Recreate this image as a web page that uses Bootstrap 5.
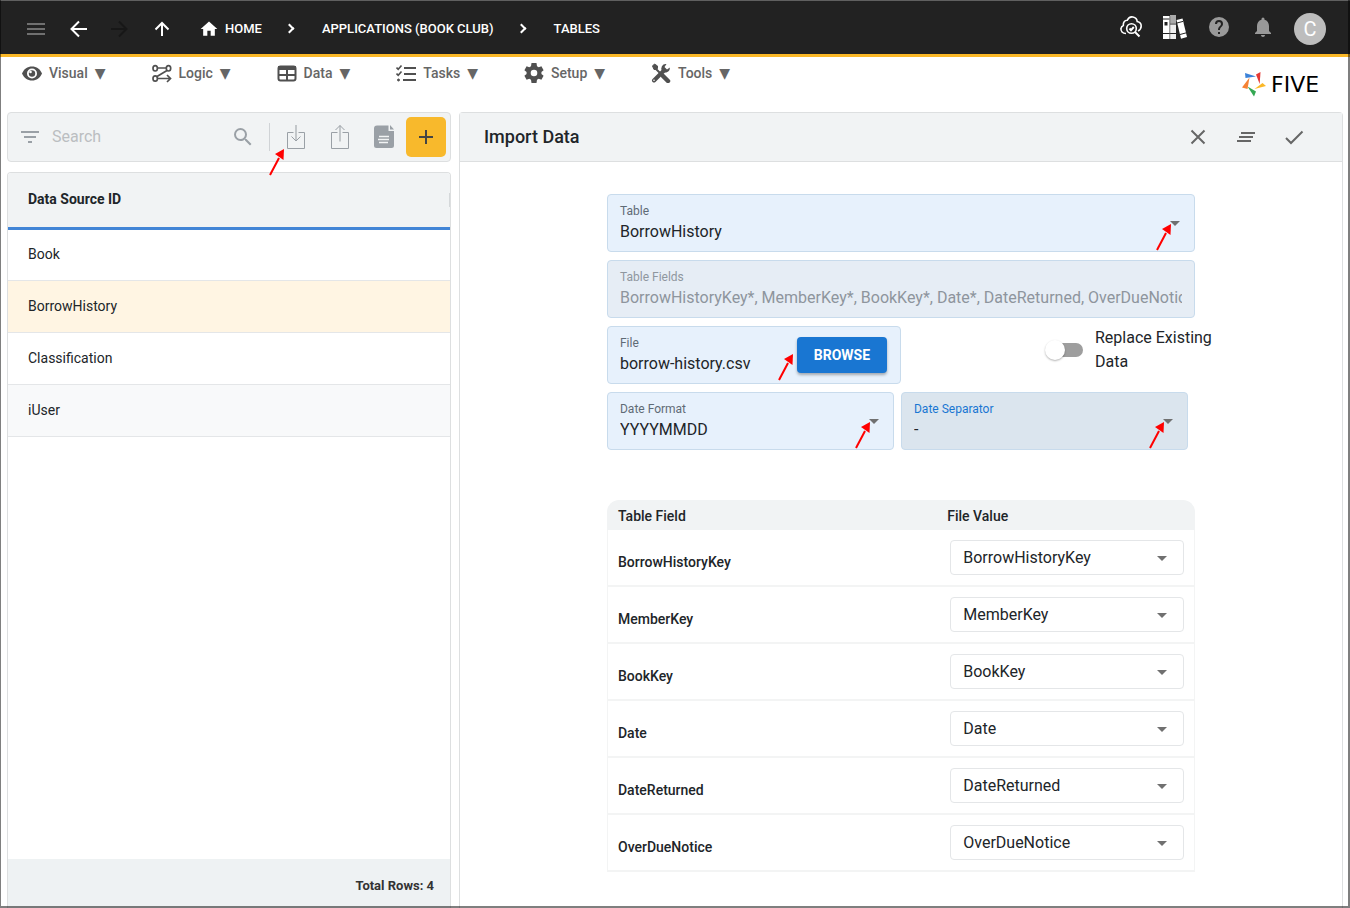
<!DOCTYPE html>
<html lang="en">
<head>
<meta charset="utf-8">
<meta name="viewport" content="width=device-width, initial-scale=1">
<title>Five - Import Data</title>
<link href="https://cdn.jsdelivr.net/npm/bootstrap@5.3.0/dist/css/bootstrap.min.css" rel="stylesheet">
<style>
  body { font-family: Roboto, "Noto Sans", sans-serif; color: #212529; background: #fff; font-size: 14px; }
  body::after { content: ""; position: fixed; inset: 0; pointer-events: none; z-index: 10;
    border: solid rgba(0,0,0,.5); border-width: 0 2px 2px 1px; }
  a { color: inherit; text-decoration: none; }
  svg { display: block; flex: none; }
  .icon-btn { display: flex; align-items: center; justify-content: center; padding: 0; border: 0; background: none; color: inherit; }

  .topbar { height: 57px; padding: 2px 24px 0; background: #222; border-top: 1px solid #606060; border-bottom: 3px solid #fbb827; color: #fff; }
  .tool-nav { gap: 18px; }
  .crumbs { margin-left: 25px; font-size: 13px; font-weight: 500; }
  .crumbs li { display: flex; align-items: center; }
  .crumbs a { display: flex; align-items: center; gap: 6px; }
  .crumbs li + li::before { content: ""; width: 7px; height: 7px; margin: 0 29px 0 24px; border: solid #fff; border-width: 2px 2px 0 0; transform: rotate(45deg); }
  .status .icon-btn { width: 44px; height: 32px; padding-bottom: 4px; }
  .avatar { width: 32px; height: 32px; background: #bdbdbd; font-size: 20px; margin-left: 9px; }

  .menubar { height: 55px; padding: 4px 20px 0 22px; color: #666; }
  .menu-list { gap: 46px; font-weight: 500; height: 24px; }
  .menu-list a { display: flex; align-items: center; gap: 7px; }
  .menu-list span { font-family: "DejaVu Sans", sans-serif; font-weight: 400; }
  .menu-list svg { color: #505050; }
  .brand-five { width: 88px; margin-top: 11px; gap: 5px; height: 26px; font: 22px/26px "DejaVu Sans", sans-serif; color: #000; }

  .workspace { padding: 0 7px; gap: 8px; }
  .sidebar { flex: 0 0 444px; min-width: 0; gap: 10px; }
  .pane { border: 1px solid #dddfe0; border-bottom: 0; border-radius: 4px 4px 0 0; background: #fff; }
  .searchbar { height: 50px; padding: 0 4px 0 12px; border: 1px solid #dddfe0; border-radius: 4px; background: #f1f3f4; color: #9aa0a6; }
  .searchbar input { border: 0; background: none; outline: 0; font-size: 16px; width: 0; min-width: 0; padding: 0; margin-left: 12px; }
  .searchbar input::placeholder { color: #bbbec1; }
  .searchbar .icon-btn { width: 44px; height: 40px; }
  .searchbar .rule { width: 1px; height: 28px; background: #d0d3d6; margin: 0 4px 0 14px; }
  .searchbar .find-btn { width: 24px; }
  .searchbar .add-btn { width: 40px; border-radius: 5px; background: #f8b92c; color: #444; }
  .arrow { position: absolute; pointer-events: none; z-index: 2; }
  .at-import { left: 261px; top: 36px; }

  .sources { width: 100%; }
  .sources th { position: relative; height: 55px; padding: 0 20px; background: #f1f3f4; border-bottom: 3px solid #4285d6; font-weight: 700; }
  .sources th::after { content: ""; position: absolute; right: 0; top: 20px; width: 1px; height: 14px; background: #d5d8da; }
  .sources td { height: 52px; padding: 0 20px; border-bottom: 1px solid #e4e6e8; }
  .sources .picked td { background: #fff5e3; }
  .sources .alt td { background: #f8f9fa; }
  .totals { height: 49px; padding: 4px 16px 0; background: #eef2f3; font-size: 13px; font-weight: 700; color: #333; }

  .pane-head { height: 49px; padding: 0 24px; background: #f1f3f4; border-bottom: 1px solid #dddfe0; color: #666; }
  .pane-head h1 { font-size: 18px; font-weight: 500; color: #212529; }
  .pane-head .icon-btn { width: 48px; height: 48px; }
  .import-form { padding-top: 32px; }
  .stack { gap: 8px; }

  .field { position: relative; }
  .field label { position: absolute; left: 13px; top: 9px; font-size: 12px; line-height: 16px; color: #5f6b76; }
  .field input, .field select { height: 58px; padding: 24px 12px 8px; border: 1px solid #c8dbec; border-radius: 4px; background-color: #e7f1fc; color: #212529; font-size: 16px; line-height: 24px; }
  .field select { padding: 25px 12px 7px; }
  .field .form-select { background-position: right 14px center; }
  .form-select { background-image: url("data:image/svg+xml,%3Csvg xmlns='http://www.w3.org/2000/svg' viewBox='0 0 10 5'%3E%3Cpath d='M0 0h10L5 5z' fill='%23707070'/%3E%3C/svg%3E"); background-size: 10px 5px; }
  .field input:disabled { background-color: #e6edf5; color: #8e959d; opacity: 1; }
  .field input:disabled + label { color: #8f979f; }
  .field.active select { background-color: #dbe5ee; }
  .field.active label { color: #1976d2; }
  .field .arrow { right: 23px; top: 30px; }
  .field .at-browse { right: 107px; top: 28px; }
  .browse { position: absolute; right: 14px; top: 11px; width: 90px; height: 36px; padding: 0; border: 0; border-radius: 4px; background: #1976d2; color: #fff; font-size: 14px; font-weight: 700; line-height: 34px; box-shadow: 0 2px 3px rgba(0,0,0,.3); }
  .half { flex: 0 0 50%; }
  .dates { gap: 7px; padding-right: 7px; }
  .dates .field { flex: 1 1 0; }
  .replace { margin-right: -20px; gap: 12px; height: 48px; }
  .replace label { width: 120px; font-size: 16px; line-height: 24px; }
  .replace input { appearance: none; position: relative; flex: none; width: 34px; height: 14px; margin: 0; border-radius: 7px; background: #9e9e9e; }
  .replace input::before { content: ""; position: absolute; left: -4px; top: -3px; width: 20px; height: 20px; border-radius: 50%; background: #fff; box-shadow: 0 1px 2px rgba(0,0,0,.3); }
  .replace input:checked::before { left: 18px; }

  .mapping { width: 100%; margin-top: 50px; border-collapse: separate; border-spacing: 0; font-weight: 500; }
  .mapping th { height: 30px; padding: 2px 0 0 11px; background: #f1f3f4; font-weight: 500; line-height: 20px; }
  .mapping th:first-child { border-top-left-radius: 12px; width: 56%; }
  .mapping th:last-child { border-top-right-radius: 12px; }
  .mapping td { height: 57px; border-bottom: 2px solid #f3f4f4; padding: 10px; }
  .mapping td:first-child { border-left: 1px solid #f3f4f4; vertical-align: bottom; padding-bottom: 11px; }
  .mapping td:last-child { border-right: 1px solid #f3f4f4; padding-left: 14px; }
  .mapping label { line-height: 24px; }
  .mapping select { height: 35px; padding: 0 12px; border: 1px solid #e4e6e8; border-radius: 4px; font-size: 16px; background-position: right 16px top 15px; color: #212529; }
</style>
</head>
<body class="d-flex flex-column min-vh-100">

<svg width="0" height="0" class="position-absolute" aria-hidden="true">
  <symbol id="pointer" viewBox="0 0 16 27"><path d="M1 26 10 9" stroke="#f00" stroke-width="2" fill="none"/><path d="M15 0 6 5l8.500 6z" fill="#f00"/></symbol>
</svg>

<header class="topbar d-flex align-items-center">
  <div class="tool-nav d-flex">
    <button class="icon-btn" aria-label="Menu"><svg width="24" height="24" stroke="#707070" stroke-width="2"><path d="M3 7h18M3 12h18M3 17h18"/></svg></button>
    <button class="icon-btn" aria-label="Back"><svg width="24" height="24" fill="none" stroke="#fff" stroke-width="2"><path d="M21 12H6M13 4.500 5.500 12l7.500 7.500"/></svg></button>
    <button class="icon-btn" aria-label="Forward"><svg width="24" height="24" fill="none" stroke="#171717" stroke-width="2"><path d="M3 12h15M11 4.500l7.500 7.500-7.500 7.500"/></svg></button>
    <button class="icon-btn" aria-label="Up"><svg width="24" height="24" fill="none" stroke="#fff" stroke-width="2"><path d="M12 19V6M5.500 12.500 12 6l6.500 6.500"/></svg></button>
  </div>
  <nav aria-label="Breadcrumb">
    <ol class="crumbs list-unstyled d-flex mb-0">
      <li><a href="#"><svg width="20" height="20" viewBox="0 0 24 24" fill="#fff"><path d="M10 20v-6h4v6h5v-8h3L12 3 2 12h3v8z"/></svg>HOME</a></li>
      <li><a href="#">APPLICATIONS (BOOK CLUB)</a></li>
      <li><a href="#">TABLES</a></li>
    </ol>
  </nav>
  <div class="status d-flex align-items-center ms-auto">
    <button class="icon-btn" aria-label="Inspect cloud"><svg width="24" height="24" fill="none" stroke="#fff" stroke-width="1.600"><path d="M7 18.500C3.500 18.500 1.500 16 2 13.500c.2-1.500 1-2.500 2.300-3C4 7 6 5 8.300 5.200 9.500 2.500 11.500 1.500 14 2c2.500.5 4 2.200 4.200 4.500 2.500.5 4 2 4 4.500 0 2.500-1.200 4-3.200 5"/><circle cx="12.500" cy="13.500" r="4.800"/><path d="m10.500 13.500 1.500 1.700 2.800-3.200M16 17l4.500 4.500" stroke-width="2"/></svg></button>
    <button class="icon-btn" aria-label="Library"><svg width="26" height="26" viewBox="0 0 26 26"><path d="M1 2h7v23H1z" fill="#fff"/><path d="M8 1h6v24H8z" fill="#eee"/><path d="M8 1h6v8H8z" fill="#aaa"/><path d="m14.500 6 6-1.500L25 23l-6 1.800z" fill="#fff"/><path d="M1 5h6.500M1 19.500h13M8 10h6M15 9l6-1.600M18 20.500l6-1.600" stroke="#222" stroke-width="1"/><path d="M2.500 8h3v3.500h-3z" fill="#222"/><path d="M7.800 2v23" stroke="#555" stroke-width=".8"/></svg></button>
    <button class="icon-btn" aria-label="Help"><svg width="24" height="24" fill="#999"><path d="M12 2a10 10 0 1 0 0 20 10 10 0 0 0 0-20zm1 17h-2v-2h2v2zm2.070-7.750-.9.920C13.450 12.900 13 13.500 13 15h-2v-.5c0-1.100.450-2.100 1.170-2.830l1.240-1.260c.370-.360.590-.860.590-1.410a2 2 0 1 0-4 0H8a4 4 0 1 1 8 0c0 .880-.360 1.680-.930 2.250z"/></svg></button>
    <button class="icon-btn" aria-label="Notifications"><svg width="24" height="24" fill="#999"><path d="M12 22c1.100 0 2-.9 2-2h-4c0 1.100.9 2 2 2zm6-6v-5c0-3.070-1.630-5.640-4.500-6.320V4a1.500 1.500 0 0 0-3 0v.680C7.640 5.360 6 7.920 6 11v5l-2 2v1h16v-1l-2-2z"/></svg></button>
    <div class="avatar rounded-circle d-flex align-items-center justify-content-center">C</div>
  </div>
</header>

<div class="menubar d-flex justify-content-between">
  <nav class="menu-list d-flex align-items-center">
    <a href="#"><svg width="20" height="20" viewBox="0 0 20 20"><path d="M10 3.500C5.500 3.500 2 6 0 10.500c2 4.500 5.500 7 10 7s8-2.500 10-7c-2-4.500-5.500-7-10-7z" fill="currentColor"/><circle cx="10" cy="10.500" r="5" fill="#fff"/><circle cx="10" cy="10.500" r="3.200" fill="currentColor"/><circle cx="8.500" cy="9" r="1.300" fill="#fff"/></svg>Visual <span>▼</span></a>
    <a href="#"><svg width="20" height="20" viewBox="0 0 20 20" fill="none" stroke="currentColor" stroke-width="1.700"><ellipse cx="3.200" cy="5.300" rx="2.200" ry="2.700"/><ellipse cx="16.500" cy="5.300" rx="2.200" ry="2.700"/><ellipse cx="3.200" cy="15.500" rx="2.200" ry="2.700"/><path d="M5.500 5h8.500M15 7.500 5 13.500M5.500 15.500H18M15 12l3.500 3.500L15 19"/></svg>Logic <span>▼</span></a>
    <a href="#"><svg width="20" height="20" viewBox="0 0 20 20"><rect x="1.500" y="3.500" width="17" height="14" rx="2" fill="none" stroke="currentColor" stroke-width="2"/><path d="M1 3h18v4H1zM9 5h2v13H9zM1 11h18v2H1z" fill="currentColor"/></svg>Data <span>▼</span></a>
    <a href="#"><svg width="20" height="20" viewBox="0 0 20 20" fill="none" stroke="currentColor" stroke-width="2"><path d="M8 5h12M8 11h12M7 17h13"/><path d="m.5 4.500 1.700 1.800L5.500 2.500M.5 10.500l1.700 1.800 3.300-3.800" stroke-width="1.600"/><circle cx="2.500" cy="17" r="1" fill="currentColor" stroke-width="1"/></svg>Tasks <span>▼</span></a>
    <a href="#"><svg width="20" height="20" viewBox="2 2 20 20" fill="currentColor"><path fill-rule="evenodd" d="M19.400 13a7.500 7.500 0 0 0 0-2l2.200-1.700-2.200-4-2.700 1a8 8 0 0 0-1.700-1L14.500 2h-5L9 5.300a8 8 0 0 0-1.700 1l-2.700-1-2.200 4L4.600 11a7.500 7.500 0 0 0 0 2l-2.200 1.700 2.200 4 2.700-1a8 8 0 0 0 1.700 1l.5 3.300h5l.5-3.300a8 8 0 0 0 1.700-1l2.700 1 2.200-4zM12 15.300a3.300 3.300 0 1 1 0-6.600 3.300 3.300 0 0 1 0 6.600z"/></svg>Setup <span>▼</span></a>
    <a href="#"><svg width="20" height="20" viewBox="0 0 20 20" fill="none" stroke="currentColor"><path d="m3 4 7 7" stroke-width="2"/><path d="m1.500 3 2-2 3 2v2.500L5.500 6.500H3z" fill="currentColor"/><path d="m12 13 5 5" stroke-width="4.500" stroke-linecap="round"/><path d="m3 17.500 10-10" stroke-width="4" stroke-linecap="round"/><path d="M18.800 4.500a4.500 4.500 0 0 1-7.500 3.800A4.500 4.500 0 0 1 15.500 1l-2 3 2.500 2.500z" fill="currentColor" stroke="none"/><circle cx="3" cy="17.300" r=".8" fill="#fff" stroke="none"/></svg>Tools <span>▼</span></a>
  </nav>
  <a href="#" class="brand-five d-flex align-items-center"><svg width="24" height="26" viewBox="0 0 24 26"><path d="m3 1 11 3.500L3.500 6z" fill="#3b82d8"/><path d="M14 2.500 18.500 0l-.8 12z" fill="#e53935"/><path d="m12.500 17 8-6L24 14z" fill="#fbb827"/><path d="m5.500 14.500 8.500 5-2 5z" fill="#34a853"/><path d="M7.500 5.500 5.500 17 0 15.500z" fill="#f58233"/></svg>FIVE</a>
</div>

<main class="workspace d-flex flex-grow-1">
  <aside class="sidebar d-flex flex-column">
    <div class="searchbar d-flex align-items-center position-relative">
      <svg width="20" height="20" stroke="currentColor" stroke-width="2"><path d="M1 5h18M4 10h12M8 15h4"/></svg>
      <input type="search" class="flex-grow-1" placeholder="Search" aria-label="Search">
      <button class="icon-btn find-btn" aria-label="Find"><svg width="24" height="24" fill="currentColor"><path d="M15.500 14h-.790l-.280-.270A6.470 6.470 0 0 0 16 9.500 6.500 6.500 0 1 0 9.500 16c1.610 0 3.090-.590 4.230-1.570l.270.280v.790l5 4.990L20.490 19zm-6 0a4.500 4.500 0 1 1 0-9 4.500 4.500 0 0 1 0 9z"/></svg></button>
      <span class="rule"></span>
      <button class="icon-btn" aria-label="Import"><svg width="20" height="26" fill="none" stroke="currentColor"><path d="M7.500 8.500h-6v16h17v-16h-6"/><path d="M10 1v16" stroke="#c3c7ca" stroke-width="2"/><path d="m5.500 12.500 4.500 4.500 4.500-4.500"/></svg></button>
      <button class="icon-btn" aria-label="Export"><svg width="20" height="26" fill="none" stroke="currentColor"><path d="M7.500 8.500h-6v16h17v-16h-6"/><path d="M10 1.500v16" stroke="#c3c7ca" stroke-width="2"/><path d="M5.500 6 10 1.500 14.500 6"/></svg></button>
      <button class="icon-btn" aria-label="Document"><svg width="20" height="24" viewBox="0 0 20 24"><path d="M3 .5h11.500V6H20v14.500a2.500 2.500 0 0 1-2.500 2.500h-15A2.500 2.500 0 0 1 0 20.500v-17A3 3 0 0 1 3 .5z" fill="currentColor"/><path d="m16 0 4 4.500h-4z" fill="currentColor"/><path d="M5 11.500h10M4 14.500h11M5 17.500h9" stroke="#f1f3f4" stroke-width="1.500"/></svg></button>
      <button class="icon-btn add-btn" aria-label="Add"><svg width="24" height="24" stroke="currentColor" stroke-width="2"><path d="M12 5v14M5 12h14"/></svg></button>
      <svg class="arrow at-import" width="16" height="27"><use href="#pointer"/></svg>
    </div>
    <section class="pane flex-grow-1 d-flex flex-column overflow-hidden">
      <table class="sources">
        <thead><tr><th scope="col">Data Source ID</th></tr></thead>
        <tbody>
          <tr><td>Book</td></tr>
          <tr class="picked"><td>BorrowHistory</td></tr>
          <tr><td>Classification</td></tr>
          <tr class="alt"><td>iUser</td></tr>
        </tbody>
      </table>
      <div class="totals mt-auto d-flex align-items-center justify-content-end">Total Rows: 4</div>
    </section>
  </aside>

  <section class="pane flex-grow-1">
    <div class="pane-head d-flex align-items-center">
      <h1 class="mb-0 me-auto">Import Data</h1>
      <button class="icon-btn" aria-label="Cancel"><svg width="24" height="24" stroke="currentColor" stroke-width="2"><path d="m5.500 5.500 13 13M18.500 5.500l-13 13"/></svg></button>
      <button class="icon-btn" aria-label="Clear"><svg width="24" height="24" stroke="currentColor" stroke-width="2"><path d="M7 8h14M5 12h14M3 16h14"/></svg></button>
      <button class="icon-btn" aria-label="Save"><svg width="24" height="24" fill="none" stroke="currentColor" stroke-width="2"><path d="m4 13 5 5L20.500 6.500"/></svg></button>
    </div>
    <form class="import-form row g-0">
      <div class="col-8 offset-2">
        <div class="stack d-flex flex-column">
          <div class="field">
            <select id="table" class="form-select"><option>BorrowHistory</option></select>
            <label for="table">Table</label>
            <svg class="arrow" width="16" height="27"><use href="#pointer"/></svg>
          </div>
          <div class="field">
            <input id="fields" type="text" class="w-100" disabled value="BorrowHistoryKey*, MemberKey*, BookKey*, Date*, DateReturned, OverDueNotice">
            <label for="fields">Table Fields</label>
          </div>
          <div class="d-flex">
            <div class="field half">
              <input id="file" type="text" class="w-100" readonly value="borrow-history.csv">
              <label for="file">File</label>
              <button type="button" class="browse">BROWSE</button>
              <svg class="arrow at-browse" width="16" height="27"><use href="#pointer"/></svg>
            </div>
            <div class="replace d-flex align-items-center ms-auto">
              <input type="checkbox" role="switch" id="replace">
              <label for="replace">Replace Existing Data</label>
            </div>
          </div>
          <div class="dates d-flex">
            <div class="field">
              <select id="format" class="form-select"><option>YYYYMMDD</option></select>
              <label for="format">Date Format</label>
              <svg class="arrow" width="16" height="27"><use href="#pointer"/></svg>
            </div>
            <div class="field active">
              <select id="separator" class="form-select"><option>-</option></select>
              <label for="separator">Date Separator</label>
              <svg class="arrow" width="16" height="27"><use href="#pointer"/></svg>
            </div>
          </div>
        </div>
        <table class="mapping">
          <thead><tr><th scope="col">Table Field</th><th scope="col">File Value</th></tr></thead>
          <tbody>
            <tr><td><label for="m1">BorrowHistoryKey</label></td><td><select id="m1" class="form-select"><option>BorrowHistoryKey</option></select></td></tr>
            <tr><td><label for="m2">MemberKey</label></td><td><select id="m2" class="form-select"><option>MemberKey</option></select></td></tr>
            <tr><td><label for="m3">BookKey</label></td><td><select id="m3" class="form-select"><option>BookKey</option></select></td></tr>
            <tr><td><label for="m4">Date</label></td><td><select id="m4" class="form-select"><option>Date</option></select></td></tr>
            <tr><td><label for="m5">DateReturned</label></td><td><select id="m5" class="form-select"><option>DateReturned</option></select></td></tr>
            <tr><td><label for="m6">OverDueNotice</label></td><td><select id="m6" class="form-select"><option>OverDueNotice</option></select></td></tr>
          </tbody>
        </table>
      </div>
    </form>
  </section>
</main>
<script src="https://cdn.jsdelivr.net/npm/bootstrap@5.3.0/dist/js/bootstrap.bundle.min.js"></script>
</body>
</html>
